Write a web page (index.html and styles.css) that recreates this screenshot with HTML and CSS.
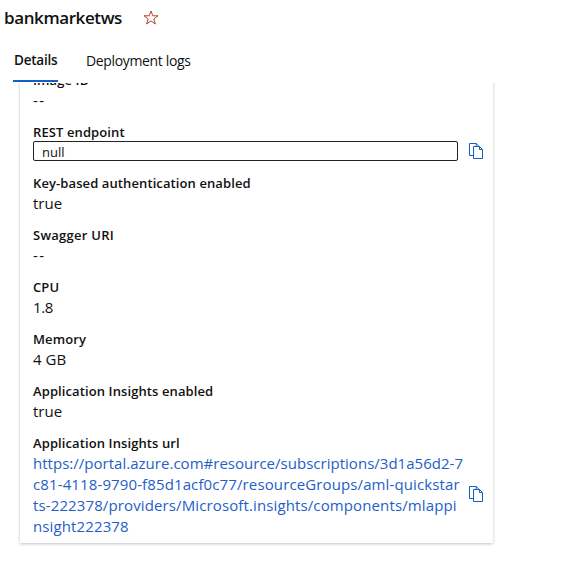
FILE: index.html
```html
<!DOCTYPE html>
<html lang="en">
<head>
<meta charset="utf-8">
<title>bankmarketws</title>
<link rel="stylesheet" href="styles.css">
</head>
<body>
<svg width="0" height="0" class="defs">
  <symbol id="copy" viewBox="0 0 15 17">
    <path d="M4.5 12.5H.5V.5H7.2L10 3.3M4.5 3.5H10.5L13.5 6.5V15.5H4.5ZM10.5 3.5V6.5H13.5M7.2 .5V3.5" fill="none" stroke="currentColor"/>
  </symbol>
</svg>
<header class="header">
  <h1 class="title">bankmarketws</h1>
  <svg class="star" viewBox="0 0 16 15"><path d="M8 1L9.8 5.8H15L10.8 9L12.4 14L8 10.9L3.6 14L5.2 9L1 5.8H6.2Z" fill="none" stroke="currentColor"/></svg>
</header>
<nav class="tabs">
  <a class="tab active">Details</a>
  <a class="tab logs">Deployment logs</a>
</nav>
<main class="viewport">
  <dl class="card">
    <div class="field"><dt>Image ID</dt><dd class="dash">--</dd></div>
    <div class="field rest"><dt>REST endpoint</dt><dd class="row"><span class="input">null</span><svg class="copy"><use href="#copy"/></svg></dd></div>
    <div class="field"><dt>Key-based authentication enabled</dt><dd>true</dd></div>
    <div class="field"><dt class="l-swagger">Swagger URI</dt><dd class="dash">--</dd></div>
    <div class="field"><dt>CPU</dt><dd class="number">1.8</dd></div>
    <div class="field"><dt>Memory</dt><dd>4 GB</dd></div>
    <div class="field"><dt>Application Insights enabled</dt><dd>true</dd></div>
    <div class="field"><dt>Application Insights url</dt><dd class="row"><a class="link"><span class="first">https://portal.azure.com#resource/subscriptions/3d1a56d2-7</span><span>c81-4118-9790-f85d1acf0c77/resourceGroups/aml-quickstar</span><span>ts-222378/providers/Microsoft.insights/components/mlappi</span><span>nsight222378</span></a><svg class="copy"><use href="#copy"/></svg></dd></div>
  </dl>
</main>
</body>
</html>
```
FILE: styles.css
```css
* { box-sizing: border-box; }
body { margin: 0; height: 576px; overflow: hidden; background: #fff; color: #111; font-family: "Open Sans", "Noto Sans", sans-serif; font-size: 14px; }
.defs { display: block; height: 0; }
.header { display: flex; align-items: center; height: 36px; padding-left: 4px; }
.title { margin: -1px 0 0; width: 139px; font-size: 17px; line-height: 24px; font-weight: 600; letter-spacing: -.4px; }
.star { width: 16px; height: 15px; margin-top: -1px; color: #b8402c; }
.tabs { display: flex; height: 46px; padding-left: 13px; gap: 28px; }
.tab { height: 46px; line-height: 49px; font-size: 14px; white-space: nowrap; }
.active { width: 45px; padding-left: 1px; border-bottom: 2px solid #1160c4; font-weight: 600; font-size: 13.5px; letter-spacing: -.24px; }
.logs { letter-spacing: -.35px; }
.viewport { height: 493px; margin-top: 1px; padding-left: 20px; overflow: hidden; }
.card { width: 473px; height: 473px; margin: -13px 0 0; padding: 0 0 0 13px; background: #fff; box-shadow: 0 1px 3px rgba(0,0,0,.24); }
.field { height: 52px; }
.rest { height: 51px; }
dt { height: 20px; line-height: 20px; font-size: 13px; font-weight: 600; letter-spacing: .1px; white-space: nowrap; }
.l-swagger { letter-spacing: .26px; }
dd { margin: 0; line-height: 21px; font-size: 15px; }
.dash { letter-spacing: 1.5px; }
.number { letter-spacing: -.4px; }
.row { display: flex; align-items: center; }
.rest dt { height: 19px; }
.input { width: 425px; height: 20px; flex: none; border: 1px solid #222; border-radius: 2px; padding-left: 8px; line-height: 20px; font-size: 13px; }
.copy { width: 15px; height: 17px; margin-left: 11px; flex: none; color: #1a5dc4; }
.link { width: 425px; color: #1f60c8; flex: none; }
.link span { display: block; white-space: nowrap; letter-spacing: .12px; }
.link .first { letter-spacing: .02px; }
.link + .copy { margin-top: -2px; }
```
